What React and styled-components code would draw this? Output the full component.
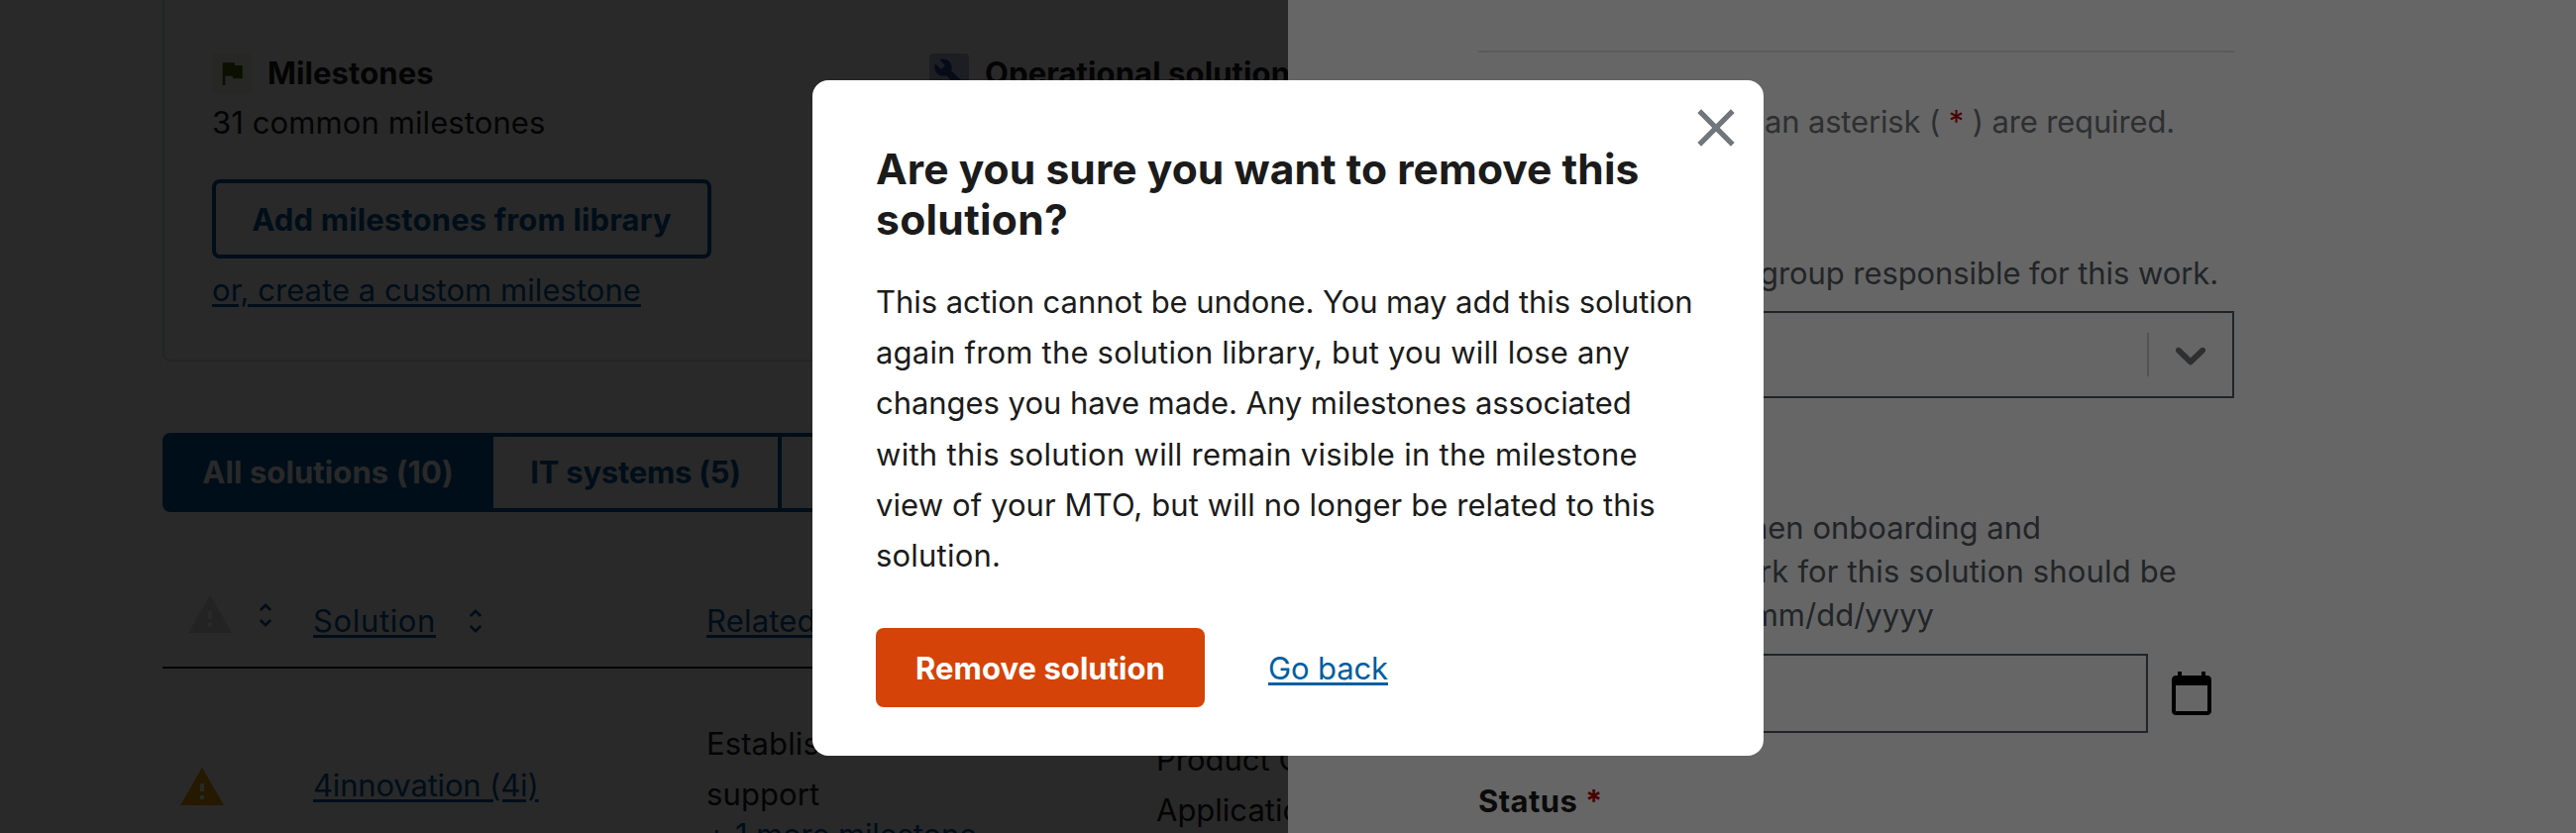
import React from "react";
import styled, { createGlobalStyle, css } from "styled-components";

const colors = {
  ink: "#1b1b1b",
  base: "#71767a",
  baseDark: "#565c65",
  baseLighter: "#dfe1e2",
  primary: "#005ea2",
  danger: "#d54309",
  required: "#b50909",
  warning: "#e5a000",
};

const GlobalStyle = createGlobalStyle`
  *, *::before, *::after { box-sizing: border-box; }
  body {
    margin: 0;
    font-family: Inter, "Liberation Sans", sans-serif;
    font-size: 31px;
    line-height: 51.2px;
    color: ${colors.ink};
    overflow: hidden;
  }
  h2, h3, p { margin: 0; }
  button { font: inherit; cursor: pointer; }
`;

const tracking = css`
  letter-spacing: ${(p) => p.$track || 0}px;
`;

const Screen = styled.div`
  position: relative;
  display: flex;
  width: 2600px;
  height: 841px;
  overflow: hidden;
`;

/* Page behind the side panel */

const Page = styled.main`
  position: relative;
  width: 1300px;
  height: 841px;
  padding-left: 164px;
  background: #fff;
  overflow: hidden;
`;

const Scrim = styled.div`
  position: absolute;
  inset: 0;
  background: rgba(0, 0, 0, 0.6);
`;

const LibraryCard = styled.section`
  display: grid;
  grid-template-columns: 724px 724px;
  width: 2000px;
  height: 365px;
  padding: 54px 0 0 48px;
  border: 2px solid ${colors.baseLighter};
  border-top: 0;
  border-radius: 0 0 8px 8px;
`;

const LibraryColumn = styled.div`
  display: flex;
  flex-direction: column;
  align-items: flex-start;
`;

const LibraryHeading = styled.div`
  display: flex;
  align-items: center;
  gap: 16px;
  height: 40px;
  margin-bottom: 4px;
`;

const IconBadge = styled.span`
  display: flex;
  align-items: center;
  justify-content: center;
  width: 40px;
  height: 40px;
  border-radius: 4px;
  background: ${(p) => p.$bg};
  color: ${(p) => p.$fg};
`;

const LibraryTitle = styled.h3`
  font-size: 31px;
  font-weight: 700;
  white-space: nowrap;
  ${tracking}
`;

const Text = styled.p`
  white-space: nowrap;
  ${tracking}
`;

const TextLink = styled.a`
  color: ${colors.primary};
  text-decoration: underline;
  text-decoration-thickness: 3px;
  text-underline-offset: 3px;
  white-space: nowrap;
  ${tracking}
`;

const OutlineButton = styled.button`
  width: 504px;
  height: 80px;
  margin: 32px 0 6px;
  padding: 0;
  border: 4px solid ${colors.primary};
  border-radius: 8px;
  background: transparent;
  color: ${colors.primary};
  font-weight: 700;
  ${tracking}
`;

const Tabs = styled.div`
  display: flex;
  width: 1500px;
  height: 80px;
  margin-top: 72px;
  border: 4px solid ${colors.primary};
  border-radius: 8px;
`;

const Tab = styled.button`
  width: ${(p) => p.$width}px;
  padding: 0;
  border: 0;
  border-right: 4px solid ${colors.primary};
  background: ${(p) => (p.$active ? colors.primary : "transparent")};
  color: ${(p) => (p.$active ? "#fff" : colors.primary)};
  font-weight: 700;
  ${tracking}
`;

const tableColumns = css`
  display: grid;
  grid-template-columns: 152px 397px 454px 400px;
  align-items: start;
`;

const HeaderRow = styled.div`
  ${tableColumns}
  height: 158px;
  padding-top: 84px;
  border-bottom: 2px solid ${colors.ink};
`;

const HeaderCell = styled.div`
  display: flex;
  align-items: center;
  gap: ${(p) => p.$gap || 24}px;
  height: ${(p) => p.$height || 52}px;
  padding-left: ${(p) => p.$indent || 0}px;
`;

const BodyRow = styled.div`
  ${tableColumns}
`;

const BodyCell = styled.div`
  padding: ${(p) => p.$top}px 0 0 ${(p) => p.$indent || 0}px;
`;

const MoreLink = styled.p`
  color: ${colors.primary};
  line-height: 31px;
  white-space: nowrap;
  ${tracking}
`;

const Icon = styled.svg`
  display: block;
  flex: none;
  width: ${(p) => p.$size}px;
  height: ${(p) => p.$size}px;
  fill: currentColor;
  color: ${(p) => p.$color || "inherit"};
`;

/* Side panel */

const SidePanel = styled.aside`
  width: 1300px;
  height: 841px;
  padding: 51px 0 0 192px;
  background: #fff;
`;

const Form = styled.form`
  display: flex;
  flex-direction: column;
  width: 763px;
`;

const Divider = styled.hr`
  width: 100%;
  height: 2px;
  margin: 0 0 44px;
  border: 0;
  background: ${colors.baseLighter};
`;

const HelpLine = styled.p`
  display: flex;
  justify-content: flex-end;
  width: ${(p) => p.$width}px;
  color: ${colors.base};
  white-space: pre;
  ${tracking}
`;

const HintLine = styled(HelpLine)`
  color: ${colors.baseDark};
  line-height: 44px;
`;

const Required = styled.span`
  color: ${colors.required};
`;

const FieldLabel = styled.label`
  margin-top: ${(p) => p.$top}px;
  font-weight: 700;
  line-height: 44px;
  ${tracking}
`;

const Select = styled.div`
  display: flex;
  align-items: center;
  justify-content: flex-end;
  gap: 16px;
  height: 88px;
  margin-top: 16px;
  padding-right: 16px;
  border: 2px solid ${colors.baseDark};
  color: ${colors.base};
`;

const Separator = styled.span`
  width: 2px;
  height: 44px;
  background: #ccc;
`;

const DateRow = styled.div`
  display: flex;
  align-items: center;
  gap: 20px;
  margin-top: 17px;
  color: #000;
`;

const DateInput = styled.div`
  width: 676px;
  height: 80px;
  border: 2px solid ${colors.baseDark};
`;

/* Modal */

const ModalLayer = styled.div`
  position: absolute;
  inset: 0;
  display: flex;
  align-items: flex-start;
  justify-content: center;
  padding-top: 81px;
  background: rgba(0, 0, 0, 0.6);
`;

const Modal = styled.div`
  position: relative;
  width: 960px;
  height: 682px;
  padding: 64px 64px 48px;
  border-radius: 16px;
  background: #fff;
`;

const CloseButton = styled.button`
  position: absolute;
  top: 16px;
  right: 16px;
  padding: 0;
  border: 0;
  background: none;
  color: ${colors.base};
`;

const ModalTitle = styled.h2`
  margin-bottom: 32px;
  font-size: 42.56px;
  line-height: 51px;
  font-weight: 700;
`;

const ModalLine = styled.span`
  display: block;
  white-space: nowrap;
  ${tracking}
`;

const Actions = styled.div`
  display: flex;
  align-items: center;
  gap: 64px;
  margin-top: 48px;
`;

const DangerButton = styled.button`
  width: 332px;
  height: 80px;
  padding: 0;
  border: 0;
  border-radius: 8px;
  background: ${colors.danger};
  color: #fff;
  font-weight: 700;
  ${tracking}
`;

const paths = {
  flag: "M14.4 6L14 4H5v17h2v-7h5.6l.4 2h7V6z",
  wrench:
    "M22.7 19l-9.1-9.1c.9-2.3.4-5-1.5-6.9-2-2-5-2.4-7.4-1.3L9 6 6 9 1.6 4.7C.4 7.1.9 10.1 2.9 12.1c1.9 1.9 4.6 2.4 6.9 1.5l9.1 9.1c.4.4 1 .4 1.4 0l2.3-2.3c.5-.4.5-1.1.1-1.4z",
  warning: "M1 21h22L12 2 1 21zm12-3h-2v-2h2v2zm0-4h-2v-4h2v4z",
  sort: "M12 5.83L15.17 9l1.41-1.41L12 3 7.41 7.59 8.83 9 12 5.83zm0 12.34L8.83 15l-1.41 1.41L12 21l4.59-4.59L15.17 15 12 18.17z",
  calendar:
    "M20 3h-1V1h-2v2H7V1H5v2H4c-1.1 0-2 .9-2 2v16c0 1.1.9 2 2 2h16c1.1 0 2-.9 2-2V5c0-1.1-.9-2-2-2zm0 18H4V8h16v13z",
  close:
    "M19 6.41L17.59 5 12 10.59 6.41 5 5 6.41 10.59 12 5 17.59 6.41 19 12 13.41 17.59 19 19 17.59 13.41 12z",
  chevron:
    "M4.516 7.548c0.436-0.446 1.043-0.481 1.576 0l3.908 3.747 3.908-3.747c0.533-0.481 1.141-0.446 1.574 0 0.436 0.445 0.408 1.197 0 1.615-0.406 0.418-4.695 4.502-4.695 4.502-0.217 0.223-0.502 0.335-0.787 0.335s-0.57-0.112-0.789-0.335c0 0-4.287-4.084-4.695-4.502s-0.436-1.17 0-1.615z",
};

function Glyph({ name, size, color, box = 24 }) {
  return (
    <Icon $size={size} $color={color} viewBox={`0 0 ${box} ${box}`} aria-hidden="true">
      <path d={paths[name]} />
    </Icon>
  );
}

const modalLines = [
  ["This action cannot be undone. You may add this solution", -0.06],
  ["again from the solution library, but you will lose any", 0.19],
  ["changes you have made. Any milestones associated", -0.04],
  ["with this solution will remain visible in the milestone", 0.28],
  ["view of your MTO, but will no longer be related to this", 0.09],
  ["solution.", 0.2],
];

export default function App() {
  return (
    <Screen>
      <GlobalStyle />
      <Page>
        <LibraryCard>
          <LibraryColumn>
            <LibraryHeading>
              <IconBadge $bg="#f2f4e6" $fg="#466c04">
                <Glyph name="flag" size={32} />
              </IconBadge>
              <LibraryTitle $track={0.1}>Milestones</LibraryTitle>
            </LibraryHeading>
            <Text $track={0.1}>31 common milestones</Text>
            <OutlineButton $track={0.15}>Add milestones from library</OutlineButton>
            <TextLink $track={0.05}>or, create a custom milestone</TextLink>
          </LibraryColumn>
          <LibraryColumn>
            <LibraryHeading>
              <IconBadge $bg="#b0bfe0" $fg="#2c469c">
                <Glyph name="wrench" size={32} />
              </IconBadge>
              <LibraryTitle $track={0.1}>Operational solutions</LibraryTitle>
            </LibraryHeading>
          </LibraryColumn>
        </LibraryCard>

        <Tabs>
          <Tab $active $width={330} $track={0.1}>All solutions (10)</Tab>
          <Tab $width={291} $track={-0.24}>IT systems (5)</Tab>
        </Tabs>

        <HeaderRow>
          <HeaderCell $indent={24} $gap={16} $height={40}>
            <Glyph name="warning" size={48} color="#dcdee0" />
            <Glyph name="sort" size={32} color={colors.primary} />
          </HeaderCell>
          <HeaderCell>
            <TextLink $track={0.64}>Solution</TextLink>
            <Glyph name="sort" size={32} color={colors.primary} />
          </HeaderCell>
          <HeaderCell>
            <TextLink $track={0.2}>Related milestones</TextLink>
          </HeaderCell>
        </HeaderRow>
        <BodyRow>
          <BodyCell $top={96} $indent={16}>
            <Glyph name="warning" size={48} color={colors.warning} />
          </BodyCell>
          <BodyCell $top={92}>
            <TextLink $track={-0.17}>4innovation (4i)</TextLink>
          </BodyCell>
          <BodyCell $top={50}>
            <Text $track={0.1}>Establish</Text>
            <Text $track={0.1}>support</Text>
            <MoreLink $track={-0.15}>+ 1 more milestone</MoreLink>
          </BodyCell>
          <BodyCell $top={66}>
            <Text>Product Owner,</Text>
            <Text>Application</Text>
          </BodyCell>
        </BodyRow>
        <Scrim />
      </Page>

      <SidePanel>
        <Form>
          <Divider />
          <HelpLine $width={703} $track={-0.15}>
            Fields marked with an asterisk ( <Required>*</Required> ) are required.
          </HelpLine>
          <FieldLabel $top={62}>Facilitated by</FieldLabel>
          <HintLine $width={747} $track={-0.08}>
            Choose the team or group responsible for this work.
          </HintLine>
          <Select>
            <Separator />
            <Glyph name="chevron" size={52} box={20} />
          </Select>
          <FieldLabel $top={65}>Need by</FieldLabel>
          <HintLine $width={568}>This is the date when onboarding and</HintLine>
          <HintLine $width={705} $track={0.15}>any other work for this solution should be</HintLine>
          <HintLine $width={460}>completed. Format: mm/dd/yyyy</HintLine>
          <DateRow>
            <DateInput />
            <Glyph name="calendar" size={48} />
          </DateRow>
          <FieldLabel $top={47} $track={0.4}>
            Status <Required>*</Required>
          </FieldLabel>
        </Form>
      </SidePanel>

      <ModalLayer>
        <Modal role="dialog">
          <CloseButton aria-label="Close">
            <Glyph name="close" size={64} />
          </CloseButton>
          <ModalTitle>
            <ModalLine $track={0.06}>Are you sure you want to remove this</ModalLine>
            <ModalLine $track={0.3}>solution?</ModalLine>
          </ModalTitle>
          <p>
            {modalLines.map(([text, track]) => (
              <ModalLine key={text} $track={track}>{text}</ModalLine>
            ))}
          </p>
          <Actions>
            <DangerButton $track={0.05}>Remove solution</DangerButton>
            <TextLink $track={-0.13}>Go back</TextLink>
          </Actions>
        </Modal>
      </ModalLayer>
    </Screen>
  );
}
